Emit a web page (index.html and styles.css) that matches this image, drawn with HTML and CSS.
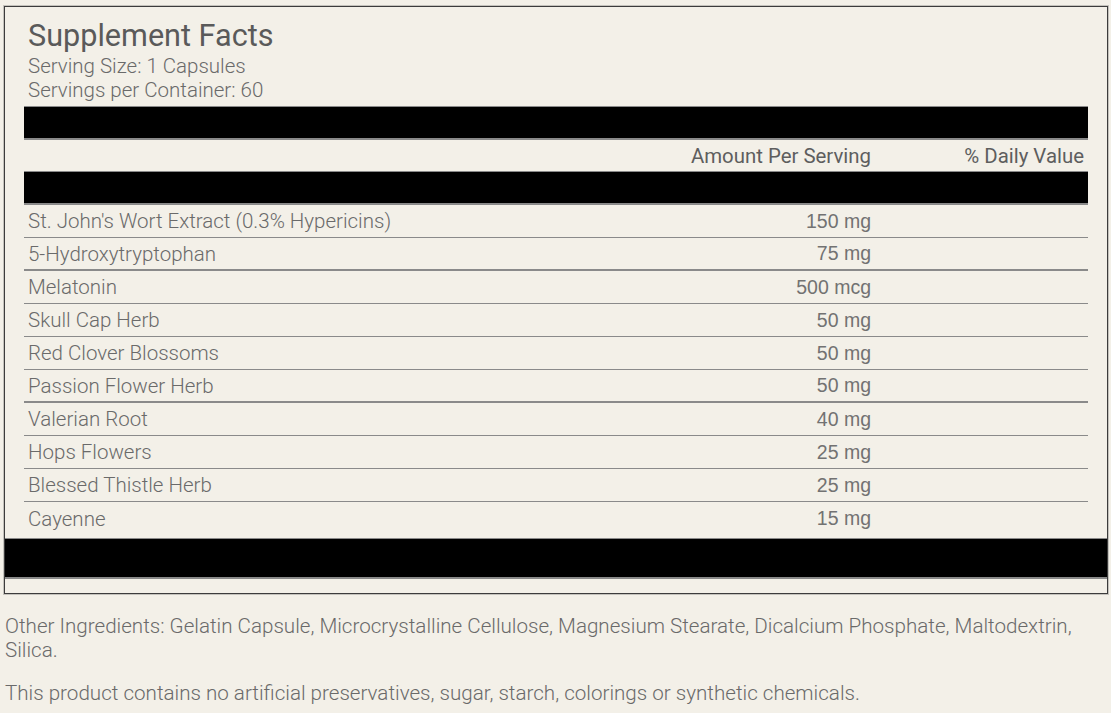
FILE: index.html
```html
<!DOCTYPE html>
<html>
<head>
<meta charset="utf-8">
<link rel="stylesheet" href="styles.css">
</head>
<body>
<div class="facts">
  <div class="facts-inner">
    <h1 class="title">Supplement Facts</h1>
    <div class="serving">Serving Size: 1 Capsules</div>
    <div class="serving">Servings per Container: 60</div>
    <div class="bar bar-top"></div>
    <div class="head-row">
      <span class="col-name"></span>
      <span class="col-amt">Amount Per Serving</span>
      <span class="col-dv">% Daily Value</span>
    </div>
    <div class="bar bar-mid"></div>
    <div class="row"><span class="col-name">St. John's Wort Extract (0.3% Hypericins)</span><span class="col-amt amt">150 mg</span><span class="col-dv"></span></div>
    <div class="row thick"><span class="col-name">5-Hydroxytryptophan</span><span class="col-amt amt">75 mg</span><span class="col-dv"></span></div>
    <div class="row"><span class="col-name">Melatonin</span><span class="col-amt amt">500 mcg</span><span class="col-dv"></span></div>
    <div class="row"><span class="col-name">Skull Cap Herb</span><span class="col-amt amt">50 mg</span><span class="col-dv"></span></div>
    <div class="row"><span class="col-name">Red Clover Blossoms</span><span class="col-amt amt">50 mg</span><span class="col-dv"></span></div>
    <div class="row thick"><span class="col-name">Passion Flower Herb</span><span class="col-amt amt">50 mg</span><span class="col-dv"></span></div>
    <div class="row"><span class="col-name">Valerian Root</span><span class="col-amt amt">40 mg</span><span class="col-dv"></span></div>
    <div class="row"><span class="col-name">Hops Flowers</span><span class="col-amt amt">25 mg</span><span class="col-dv"></span></div>
    <div class="row"><span class="col-name">Blessed Thistle Herb</span><span class="col-amt amt">25 mg</span><span class="col-dv"></span></div>
    <div class="row last"><span class="col-name">Cayenne</span><span class="col-amt amt">15 mg</span><span class="col-dv"></span></div>
  </div>
  <div class="bar bar-foot"></div>
</div>
<p class="note">Other Ingredients: Gelatin Capsule, Microcrystalline Cellulose, Magnesium Stearate, Dicalcium Phosphate, Maltodextrin, Silica.</p>
<p class="note">This product contains no artificial preservatives, sugar, starch, colorings or synthetic chemicals.</p>
</body>
</html>
```

FILE: styles.css
```css
html, body {
  margin: 0;
  padding: 0;
  background: #f3f0e8;
}
body {
  font-family: "Roboto", "Liberation Sans", sans-serif;
  color: #6a6a6a;
}
.facts {
  margin: 6px 3px 0 4px;
  border: 1px solid #3c3c3c;
  box-shadow: 0 0 0 1px #c4c2bc;
  padding-bottom: 14px;
}
.facts-inner {
  padding: 11px 19px 3px 19px;
}
.title {
  margin: 0;
  font-weight: 400;
  font-size: 30.6px;
  line-height: 36px;
  color: #5a5a5a;
  padding-left: 4px;
}
.serving {
  font-size: 20.5px;
  line-height: 24px;
  font-weight: 300;
  padding-left: 4px;
}
.bar {
  background: #000;
  border-top: 1px solid #8a8a8a;
  border-bottom: 2px solid #8a8a8a;
}
.bar-top {
  margin-top: 4px;
  height: 31px;
}
.bar-mid {
  height: 31px;
}
.bar-foot {
  height: 38px;
}
.head-row, .row {
  display: flex;
  align-items: center;
  font-size: 20.5px;
}
.head-row {
  height: 31px;
  font-size: 20.4px;
  color: #5e5e5e;
}
.row {
  box-sizing: border-box;
  height: 33px;
  border-bottom: 1px solid #8a8a8a;
  font-weight: 300;
}
.row.thick {
  border-bottom-width: 2px;
}
.row.last {
  border-bottom: none;
}
.col-name {
  flex: 1;
  padding-left: 4px;
}
.col-amt {
  text-align: right;
}
.col-dv {
  width: 217px;
  text-align: right;
  padding-right: 4px;
  box-sizing: border-box;
}
.amt {
  font-family: "Liberation Sans", Arial, sans-serif;
  font-weight: 400;
  font-size: 19.5px;
  color: #727272;
}
.note {
  margin: 20px 0 0 0;
  padding: 0 5px;
  font-size: 20.6px;
  line-height: 24px;
  font-weight: 300;
}
.note + .note {
  margin-top: 19px;
}
```
